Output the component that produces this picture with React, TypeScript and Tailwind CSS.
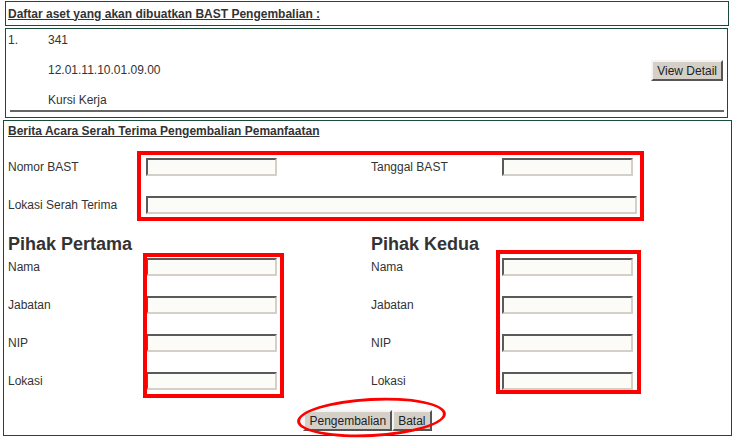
import React from 'react';

const font = { fontFamily: '"Liberation Sans", Arial, sans-serif' };

const inputCls =
  'h-[18px] bg-[#fbfbf7] border-2 border-t-[#5a5a5a] border-l-[#5a5a5a] border-b-[#d4d0c8] border-r-[#d4d0c8] outline-none';

const btnCls =
  'h-[21px] px-[4px] bg-[#d4d0c8] text-[12px] leading-none text-[#222] border-2 border-t-[#f4f4f4] border-l-[#f4f4f4] border-b-[#555] border-r-[#555]';

function Party({ title, labelW }: { title: string; labelW: string }) {
  const fields = ['Nama', 'Jabatan', 'NIP', 'Lokasi'];
  return (
    <div className="flex flex-col">
      <div className="h-[21px] leading-[21px] text-[18px] font-bold text-[#333]">{title}</div>
      <div className="mt-[3px] flex flex-col gap-[20px]">
        {fields.map((f) => (
          <div key={f} className="flex h-[18px] items-center">
            <span className={`${labelW} text-[12px]`}>{f}</span>
            <input className={`${inputCls} w-[131px]`} />
          </div>
        ))}
      </div>
    </div>
  );
}

export default function App() {
  return (
    <div style={font} className="w-[734px] h-[443px] bg-white pt-[1px] text-[#333] overflow-hidden">
      {/* Asset list header */}
      <div className="ml-[5px] w-[724px] h-[25px] border border-[#184c36] flex items-center pl-[2px]">
        <span className="text-[12px] font-bold underline">Daftar aset yang akan dibuatkan BAST Pengembalian :</span>
      </div>

      {/* Asset list */}
      <div className="mt-[2px] ml-[5px] w-[723px] h-[90px] border border-[#184c36] pt-[4px] text-[12px]">
        <div className="flex flex-col gap-[15px] leading-[15px]">
          <div className="flex pl-[2px]">
            <span className="w-[40px]">1.</span>
            <span>341</span>
          </div>
          <div className="flex items-center h-[15px] pl-[42px] pr-[4px] justify-between">
            <span>12.01.11.10.01.09.00</span>
            <button className={`${btnCls} h-[20px]`}>View Detail</button>
          </div>
          <div className="pl-[42px]">Kursi Kerja</div>
        </div>
        <div className="mt-[2px] ml-[4px] mr-[3px] border-t-2 border-[#666]" />
      </div>

      {/* BAST form */}
      <div className="relative mt-[2px] ml-[3px] w-[729px] h-[316px] border border-[#184c36] pl-[4px] pt-[3px] text-[12px]">
        <div className="leading-[15px] font-bold underline">Berita Acara Serah Terima Pengembalian Pemanfaatan</div>

        <div className="mt-[19px] flex h-[18px] items-center">
          <span className="w-[138px]">Nomor BAST</span>
          <input className={`${inputCls} w-[131px]`} />
          <span className="ml-[94px] w-[131px]">Tanggal BAST</span>
          <input className={`${inputCls} w-[131px]`} />
        </div>

        <div className="mt-[20px] flex h-[18px] items-center">
          <span className="w-[138px]">Lokasi Serah Terima</span>
          <input className={`${inputCls} w-[491px]`} />
        </div>

        <div className="mt-[20px] flex">
          <div className="w-[363px]">
            <Party title="Pihak Pertama" labelW="w-[138px]" />
          </div>
          <Party title="Pihak Kedua" labelW="w-[131px]" />
        </div>

        <div className="mt-[20px] flex justify-center pr-[4px]">
          <button className={btnCls}>Pengembalian</button>
          <button className={btnCls}>Batal</button>
        </div>

        {/* red annotation marks */}
        <div className="absolute left-[133px] top-[30px] w-[507px] h-[70px] border-4 border-[#ff0000] pointer-events-none" />
        <div className="absolute left-[139px] top-[132px] w-[141px] h-[145px] border-4 border-[#ff0000] pointer-events-none" />
        <div className="absolute left-[492px] top-[129px] w-[145px] h-[144px] border-4 border-[#ff0000] pointer-events-none" />
        <div className="absolute left-[293px] top-[277px] w-[149px] h-[39px] border-[3px] border-[#ff0000] rounded-[50%] -rotate-[3deg] pointer-events-none" />
      </div>
    </div>
  );
}
